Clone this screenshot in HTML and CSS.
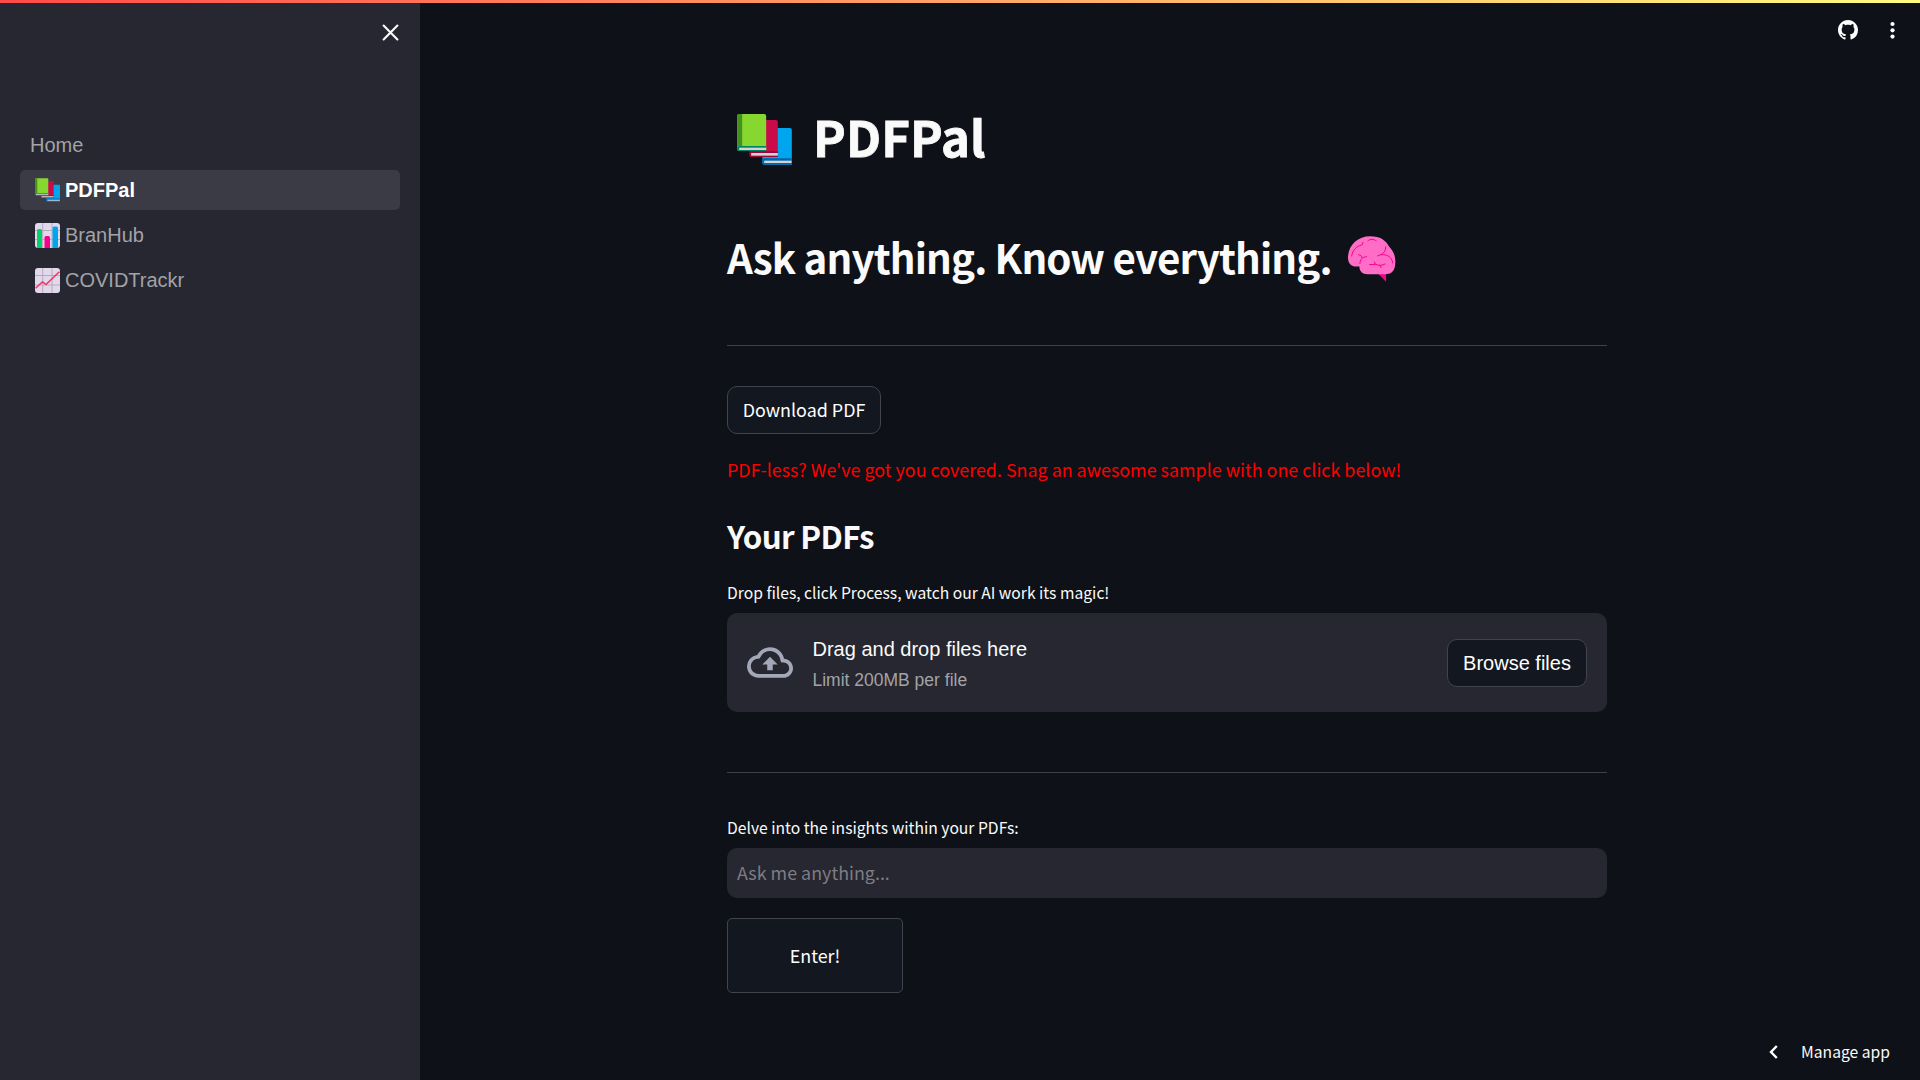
FILE: index.html
```html
<!DOCTYPE html>
<html lang="en">
<head>
<meta charset="utf-8">
<meta name="viewport" content="width=device-width, initial-scale=1">
<title>PDFPal</title>
<link rel="stylesheet" href="styles.css">
</head>
<body>

<svg class="defs" width="0" height="0">
  <symbol id="books" viewBox="51 72 164 153">
    <path d="M131 114h78q6 0 6 6v104h-83q-6 0-6-7z" fill="#00a6ed"/>
    <path d="M126 208q0-3 6-3h83v19h-83q-6 0-6-7z" fill="#0063ad"/>
    <path d="M132 212h82v7h-82z" fill="#d3d3d3"/>
    <path d="M95 90h72q6 0 6 6v105H94q-6 0-6-6z" fill="#ca0b4a"/>
    <path d="M88 188q0-4 6-4h79v17H94q-6 0-6-6z" fill="#990838"/>
    <path d="M93 189h80v8H93z" fill="#d3d3d3"/>
    <path d="M57 72h75q6 0 6 6v105H57q-6 0-6-6V78q0-6 6-6z" fill="#86d72f"/>
    <path d="M66 72v96H51V78q0-6 6-6z" fill="#44911b"/>
    <path d="M51 172q0-4 6-4h81v15H57q-6 0-6-6z" fill="#008463"/>
    <path d="M57 173h81v7H57z" fill="#d3d3d3"/>
  </symbol>
</svg>

<div class="decoration"></div>
<div class="app">
  <aside class="sidebar">
    <div class="sidebar-top">
      <svg class="close" viewBox="0 0 16 16"><path d="M1.5 1.5l13 13M14.5 1.5l-13 13" fill="none" stroke="#fafafa" stroke-width="2" stroke-linecap="round"/></svg>
    </div>
    <nav class="pages">
      <a class="page">Home</a>
      <a class="page has-icon active">
        <svg class="books-small"><use href="#books"/></svg>
        <span>PDFPal</span>
      </a>
      <a class="page has-icon">
        <svg class="page-icon" viewBox="0 0 25 25">
          <rect width="25" height="25" rx="3" fill="#e1d8ec"/>
          <path d="M7.7 0v25M17 0v25M0 7.5h25M0 16.5h25" stroke="#b4acbc" stroke-width="1"/>
          <path d="M2 25V7.5Q2 6 3.5 6h2Q7 6 7 7.5V25z" fill="#00d26a"/>
          <path d="M9.5 25V14.500q0-1.500 1.500-1.500h2.500q1.500 0 1.500 1.500V25z" fill="#f8008c"/>
          <path d="M17.500 25V5q0-1.500 1.500-1.500h2.500Q23 3.500 23 5v20z" fill="#00a6ed"/>
        </svg>
        <span>BranHub</span>
      </a>
      <a class="page has-icon">
        <svg class="page-icon" viewBox="0 0 25 25">
          <rect width="25" height="25" rx="3" fill="#e1d8ec"/>
          <path d="M7.700 0v25M17 0v25M0 7.500h25M0 17h25" stroke="#b4acbc" stroke-width="1"/>
          <path d="M.6 20.200l6.900-6.400 3.500 2.700L24.400 3.700" fill="none" stroke="#f92f60" stroke-width="1.500" stroke-linejoin="round"/>
        </svg>
        <span>COVIDTrackr</span>
      </a>
    </nav>
  </aside>

  <main class="main">
    <div class="toolbar">
      <svg class="github" viewBox="0 0 16 16"><path fill="#fff" d="M8 0C3.580 0 0 3.580 0 8c0 3.540 2.290 6.530 5.470 7.590.4.070.55-.17.55-.38 0-.19-.01-.82-.01-1.490-2.010.37-2.530-.49-2.690-.94-.09-.23-.48-.94-.82-1.130-.28-.15-.68-.52-.01-.53.630-.01 1.080.58 1.230.82.720 1.210 1.870.87 2.330.66.070-.52.280-.87.510-1.070-1.780-.2-3.640-.89-3.640-3.950 0-.87.310-1.590.820-2.150-.08-.2-.36-1.020.080-2.120 0 0 .67-.21 2.200.82.640-.18 1.320-.27 2-.27s1.360.09 2 .27c1.530-1.040 2.200-.82 2.200-.82.440 1.100.160 1.920.080 2.120.510.56.820 1.270.820 2.150 0 3.070-1.870 3.750-3.650 3.950.290.25.540.73.540 1.480 0 1.070-.01 1.930-.01 2.200 0 .21.150.46.550.38A8.010 8.010 0 0 0 16 8c0-4.420-3.580-8-8-8z"/></svg>
      <svg class="dots" viewBox="0 0 5 18"><g fill="#fff"><circle cx="2.500" cy="3" r="2.100"/><circle cx="2.500" cy="9.300" r="2.100"/><circle cx="2.500" cy="15.600" r="2.100"/></g></svg>
    </div>

    <div class="block">
      <h1><svg class="books-big"><use href="#books"/></svg><span>PDFPal</span></h1>
      <h2><span>Ask anything. Know everything.</span>
        <svg class="brain" viewBox="53 47 145 138">
          <path d="M142 158l26 27v-27z" fill="#f8008c"/>
          <path d="M120 47c30 0 48 12 58 33 12 12 18 26 18 44 0 24-8 38-32 38h-52c-16 0-24-8-25-24-22 3-34-6-34-26 0-38 29-65 67-65z" fill="#ff6dc6"/>
          <g fill="none" stroke="#f8008c" stroke-width="3" stroke-linecap="round" stroke-linejoin="round">
            <path d="M64 107c3-19 14-29 32-34l2-7M113 61c7-6 18-6 25 0M167 79c0 12-5 19-13 23l-12 5M154 103c20-2 32 9 34 25M85 103c7 1 9 4 10 9M109 109c-13 0-20 9-20 21M118 133l18-1c12 5 20 4 29-1M136 132l-3-7M149 135l4 7"/>
          </g>
        </svg>
      </h2>
      <hr>
      <button class="btn download">Download PDF</button>
      <p class="hint">PDF-less? We've got you covered. Snag an awesome sample with one click below!</p>
      <h3>Your PDFs</h3>
      <label class="upload-label">Drop files, click Process, watch our AI work its magic!</label>
      <section class="dropzone">
        <svg class="cloud" viewBox="0 4 24 16"><path fill="#a3a8b8" d="M19.350 10.040A7.490 7.490 0 0 0 12 4C9.110 4 6.600 5.640 5.350 8.040A5.994 5.994 0 0 0 0 14c0 3.310 2.690 6 6 6h13c2.760 0 5-2.240 5-5 0-2.640-2.050-4.780-4.650-4.960zM19 18H6c-2.210 0-4-1.790-4-4 0-2.050 1.530-3.760 3.560-3.970l1.070-.11.500-.95A5.469 5.469 0 0 1 12 6c2.620 0 4.880 1.860 5.390 4.430l.300 1.500 1.530.11A2.980 2.980 0 0 1 22 15c0 1.650-1.350 3-3 3zM8 13h2.550v3h2.900v-3H16l-4-4z"/></svg>
        <div class="drop-text">
          <span>Drag and drop files here</span>
          <small>Limit 200MB per file</small>
        </div>
        <button class="btn browse">Browse files</button>
      </section>
      <hr class="second">
      <label class="ask-label">Delve into the insights within your PDFs:</label>
      <input class="ask" type="text" placeholder="Ask me anything...">
      <button class="btn enter">Enter!</button>
    </div>

    <div class="manage">
      <svg class="chevron" viewBox="0 0 9 14"><path d="M7.800 1L2 7l5.800 6" fill="none" stroke="#fff" stroke-width="2.400"/></svg>
      <span>Manage app</span>
    </div>
  </main>
</div>

</body>
</html>
```
FILE: styles.css
```css
* {
  box-sizing: border-box;
}

body {
  margin: 0;
  background: #0e1117;
  color: #fafafa;
  font-family: "Noto Sans CJK JP", "Noto Sans CJK SC", sans-serif;
  font-size: 17.9px;
  overflow: hidden;
}

svg {
  display: block;
  flex: none;
}

.defs {
  position: absolute;
}

/* Coloured line over the whole page */
.decoration {
  position: absolute;
  top: 0;
  left: 0;
  right: 0;
  height: 3px;
  background: linear-gradient(90deg, #ff4b4b, #fffd80);
  z-index: 2;
}

.app {
  display: flex;
  height: 100vh;
}

/* Sidebar */
.sidebar {
  width: 420px;
  flex: none;
  background: #262730;
  font-family: "Liberation Sans", Arial, sans-serif;
  font-size: 20px;
}

.sidebar-top {
  height: 125px;
  padding: 24px 21px 0 0;
  display: flex;
  justify-content: flex-end;
}

.close {
  width: 17px;
  height: 17px;
}

.pages {
  display: flex;
  flex-direction: column;
  gap: 5px;
  padding: 0 20px;
}

.page {
  display: flex;
  align-items: center;
  height: 40px;
  padding-left: 10px;
  border-radius: 5px;
  color: #a3a3a6;
}

.has-icon {
  gap: 5px;
  padding-left: 15px;
}

.page.active {
  background: #3b3b46;
  color: #fff;
  font-weight: bold;
}

.page-icon {
  width: 25px;
  height: 25px;
}

.books-small {
  width: 25px;
  height: 24px;
}

/* Main area */
.main {
  flex: 1;
  display: flex;
  flex-direction: column;
}

.toolbar {
  display: flex;
  justify-content: flex-end;
  align-items: center;
  gap: 32px;
  height: 60px;
  padding-right: 25px;
}

.github {
  width: 20px;
  height: 20px;
}

.dots {
  width: 5px;
  height: 18px;
}

.block {
  width: 880px;
  margin: 0 0 0 307px;
  padding-top: 42px;
}

h1, h2, h3, p {
  margin: 0;
}

h1 {
  display: flex;
  align-items: center;
  gap: 21px;
  height: 66px;
  padding-left: 10px;
  font-size: 49.2px;
  font-weight: 700;
  letter-spacing: 0.1px;
  -webkit-text-stroke: 0.8px #fafafa;
}

.books-big {
  width: 55px;
  height: 51px;
  margin-top: 8px;
}

h2 {
  display: flex;
  align-items: center;
  gap: 16px;
  height: 54px;
  margin-top: 61px;
  font-size: 40.3px;
  font-weight: 600;
  letter-spacing: -0.88px;
}

.brain {
  width: 48px;
  height: 46px;
  margin-top: 5px;
}

hr {
  height: 1px;
  margin: 62px 0 40px;
  border: none;
  background: #3e4044;
}

hr.second {
  margin: 60px 0 42px;
}

.btn {
  display: block;
  padding: 0 0 2px;
  border: 1px solid #41444c;
  border-radius: 10px;
  background: #131720;
  color: #fff;
  font-family: inherit;
  font-size: 17.9px;
}

.download {
  width: 154px;
  height: 48px;
}

.hint {
  margin-top: 19px;
  line-height: 32px;
  color: #f00;
  white-space: nowrap;
}

h3 {
  margin-top: 30px;
  font-size: 31.3px;
  font-weight: 600;
  line-height: 42px;
  letter-spacing: -0.65px;
}

label {
  display: block;
  font-size: 15.66px;
  line-height: 26px;
}

.upload-label {
  margin-top: 23px;
}

.dropzone {
  display: flex;
  align-items: center;
  height: 99px;
  margin-top: 7px;
  padding: 0 20px;
  border-radius: 10px;
  background: #262730;
  font-family: "Liberation Sans", Arial, sans-serif;
}

.cloud {
  width: 46px;
  height: 31px;
}

.drop-text {
  flex: 1;
  display: flex;
  flex-direction: column;
  padding: 2px 0 0 19.5px;
  font-size: 20px;
  line-height: 32px;
}

.drop-text small {
  font-size: 17.5px;
  line-height: 30px;
  color: #a3a3a6;
}

.browse {
  width: 140px;
  height: 48px;
  padding: 1px 0 0;
  font-size: 20px;
}

.ask {
  display: block;
  width: 100%;
  height: 50px;
  margin-top: 7px;
  padding: 0 10px 2px;
  border: none;
  border-radius: 10px;
  background: #262730;
  color: #fafafa;
  font-family: inherit;
  font-size: 17.9px;
}

.ask::placeholder {
  color: #7d7d83;
}

.enter {
  width: 176px;
  height: 75px;
  margin-top: 20px;
  border-radius: 5px;
}

.manage {
  display: flex;
  align-items: center;
  gap: 23px;
  margin: auto 30px 14px auto;
  font-size: 15.66px;
  line-height: 28px;
}

.chevron {
  width: 9px;
  height: 14px;
}
```
